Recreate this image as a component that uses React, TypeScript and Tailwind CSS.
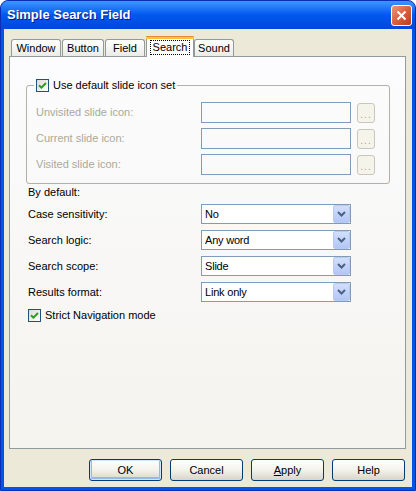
import React from "react";

const font = { fontFamily: '"Liberation Sans", Arial, sans-serif' };

function Check() {
  return (
    <span className="w-[13px] h-[13px] shrink-0 border border-[#1C5180] bg-linear-to-br from-[#DCDCD7] to-white flex items-center justify-center">
      <svg width="9" height="9" viewBox="0 0 9 9">
        <path d="M1 4.2 L3.4 6.6 L8 2" stroke="#21A121" strokeWidth="2" fill="none" />
      </svg>
    </span>
  );
}

function Tab({ label, active, w }: { label: string; active?: boolean; w: string }) {
  if (active) {
    return (
      <div
        className={`${w} h-[21px] -mb-px relative z-10 bg-white border-x border-[#919B9C] rounded-t-[3px] flex flex-col`}
      >
        <div className="h-px bg-[#E68B2C] rounded-t-[3px] -mx-px" />
        <div className="h-[2px] bg-[#FFC73C] -mx-px" />
        <div className="flex-1 flex items-center justify-center pb-[2px]">
          <span className="border border-dotted border-black px-[2px] leading-[13px]">{label}</span>
        </div>
      </div>
    );
  }
  return (
    <div
      className={`${w} h-[17px] border-x border-t border-[#919B9C] rounded-t-[3px] bg-linear-to-b from-white to-[#ECEBE6] flex items-center justify-center leading-[13px]`}
    >
      {label}
    </div>
  );
}

function IconRow({ label }: { label: string }) {
  return (
    <div className="flex items-center h-[21px]">
      <span className="w-[165px] shrink-0 text-[#ACA899]">{label}</span>
      <div className="w-[150px] shrink-0 h-[21px] border border-[#7F9DB9]" />
      <div className="ml-[6px] w-[18px] h-[20px] border border-[#C9C7BA] rounded-[3px] bg-[#F5F4EA] flex items-end justify-center pb-[3px] text-[#ACA899] text-[10px] leading-[8px] tracking-[1px]">
        ...
      </div>
    </div>
  );
}

function Combo({ label, value }: { label: string; value: string }) {
  return (
    <div className="flex items-center h-[20px]">
      <span className="w-[175px] shrink-0 pl-[2px]">{label}</span>
      <div className="w-[150px] shrink-0 h-[20px] border border-[#7F9DB9] bg-white flex items-center">
        <span className="flex-1 pl-[3px] tracking-[-0.2px]">{value}</span>
        <div className="w-[17px] h-[18px] border border-[#BAC9EF] rounded-[2px] bg-linear-to-b from-[#D2DEFB] to-[#B3C6F5] flex items-center justify-center">
          <svg width="9" height="6" viewBox="0 0 9 6">
            <path d="M1 1 L4.5 4.5 L8 1" stroke="#4D6185" strokeWidth="2" fill="none" />
          </svg>
        </div>
      </div>
    </div>
  );
}

function Btn({ children, def }: { children: React.ReactNode; def?: boolean }) {
  return (
    <button
      className={`w-[73px] h-[22px] border border-[#003C74] rounded-[3px] bg-linear-to-b from-white via-[#F3F2EC] to-[#D9D4C8] flex items-center justify-center text-[11px] ${
        def ? "shadow-[inset_0_0_0_1px_#CEE7FF,inset_0_-1px_0_2px_#98B8EA]" : ""
      }`}
    >
      {children}
    </button>
  );
}

export default function App() {
  return (
    <div
      className="w-[416px] h-[491px] bg-[#0055E5] border border-[#0A2FB6] rounded-t-[8px] flex flex-col text-[11px] text-black"
      style={font}
    >
      <div className="h-[28px] shrink-0 rounded-t-[7px] bg-linear-to-b from-[#3D95FF] via-[#0058EE] to-[#0047D9] flex items-center justify-between pl-[6px] pr-[3px]">
        <span className="text-white font-bold text-[13px] [text-shadow:1px_1px_0_#0A1883]">
          Simple Search Field
        </span>
        <div className="w-[21px] h-[21px] border border-white rounded-[3px] bg-linear-to-br from-[#EB977A] via-[#D7603D] to-[#C1391C] flex items-center justify-center">
          <svg width="11" height="11" viewBox="0 0 11 11">
            <path d="M1.5 1.5 L9.5 9.5 M9.5 1.5 L1.5 9.5" stroke="white" strokeWidth="2" />
          </svg>
        </div>
      </div>

      <div className="flex-1 mx-[3px] mb-[3px] bg-[#ECE9D8] flex flex-col pt-[7px] pl-[5px] pr-[6px]">
        <div className="flex items-end h-[20px] pl-[2px]">
          <div className="mr-px"><Tab label="Window" w="w-[50px]" /></div>
          <div className="mr-px"><Tab label="Button" w="w-[42px]" /></div>
          <div className="mr-px"><Tab label="Field" w="w-[40px]" /></div>
          <Tab label="Search" w="w-[48px]" active />
          <Tab label="Sound" w="w-[40px]" />
        </div>

        <div className="h-[393px] border border-[#919B9C] bg-linear-to-b from-[#FCFCFE] to-[#F4F3EE] pl-[16px] pr-[15px] flex flex-col">
          <fieldset className="mt-[22px] border border-[#B3B1A5] rounded-[3px] px-[9px] pt-[10px] pb-[8px] flex flex-col gap-[5px]">
            <legend className="-ml-[2px] px-[2px] flex items-center gap-[4px] h-[13px]">
              <Check />
              <span>Use default slide icon set</span>
            </legend>
            <IconRow label="Unvisited slide icon:" />
            <IconRow label="Current slide icon:" />
            <IconRow label="Visited slide icon:" />
          </fieldset>

          <div className="mt-[2px] pl-[2px] leading-[13px]">By default:</div>

          <div className="mt-[5px] flex flex-col gap-[6px]">
            <Combo label="Case sensitivity:" value="No" />
            <Combo label="Search logic:" value="Any word" />
            <Combo label="Search scope:" value="Slide" />
            <Combo label="Results format:" value="Link only" />
          </div>

          <div className="mt-[7px] pl-[2px] flex items-center gap-[4px] h-[13px]">
            <Check />
            <span>Strict Navigation mode</span>
          </div>
        </div>

        <div className="mt-[10px] flex justify-end gap-[8px] pr-[1px]">
          <Btn def>OK</Btn>
          <Btn>Cancel</Btn>
          <Btn>
            <span className="underline">A</span>pply
          </Btn>
          <Btn>Help</Btn>
        </div>
      </div>
    </div>
  );
}
